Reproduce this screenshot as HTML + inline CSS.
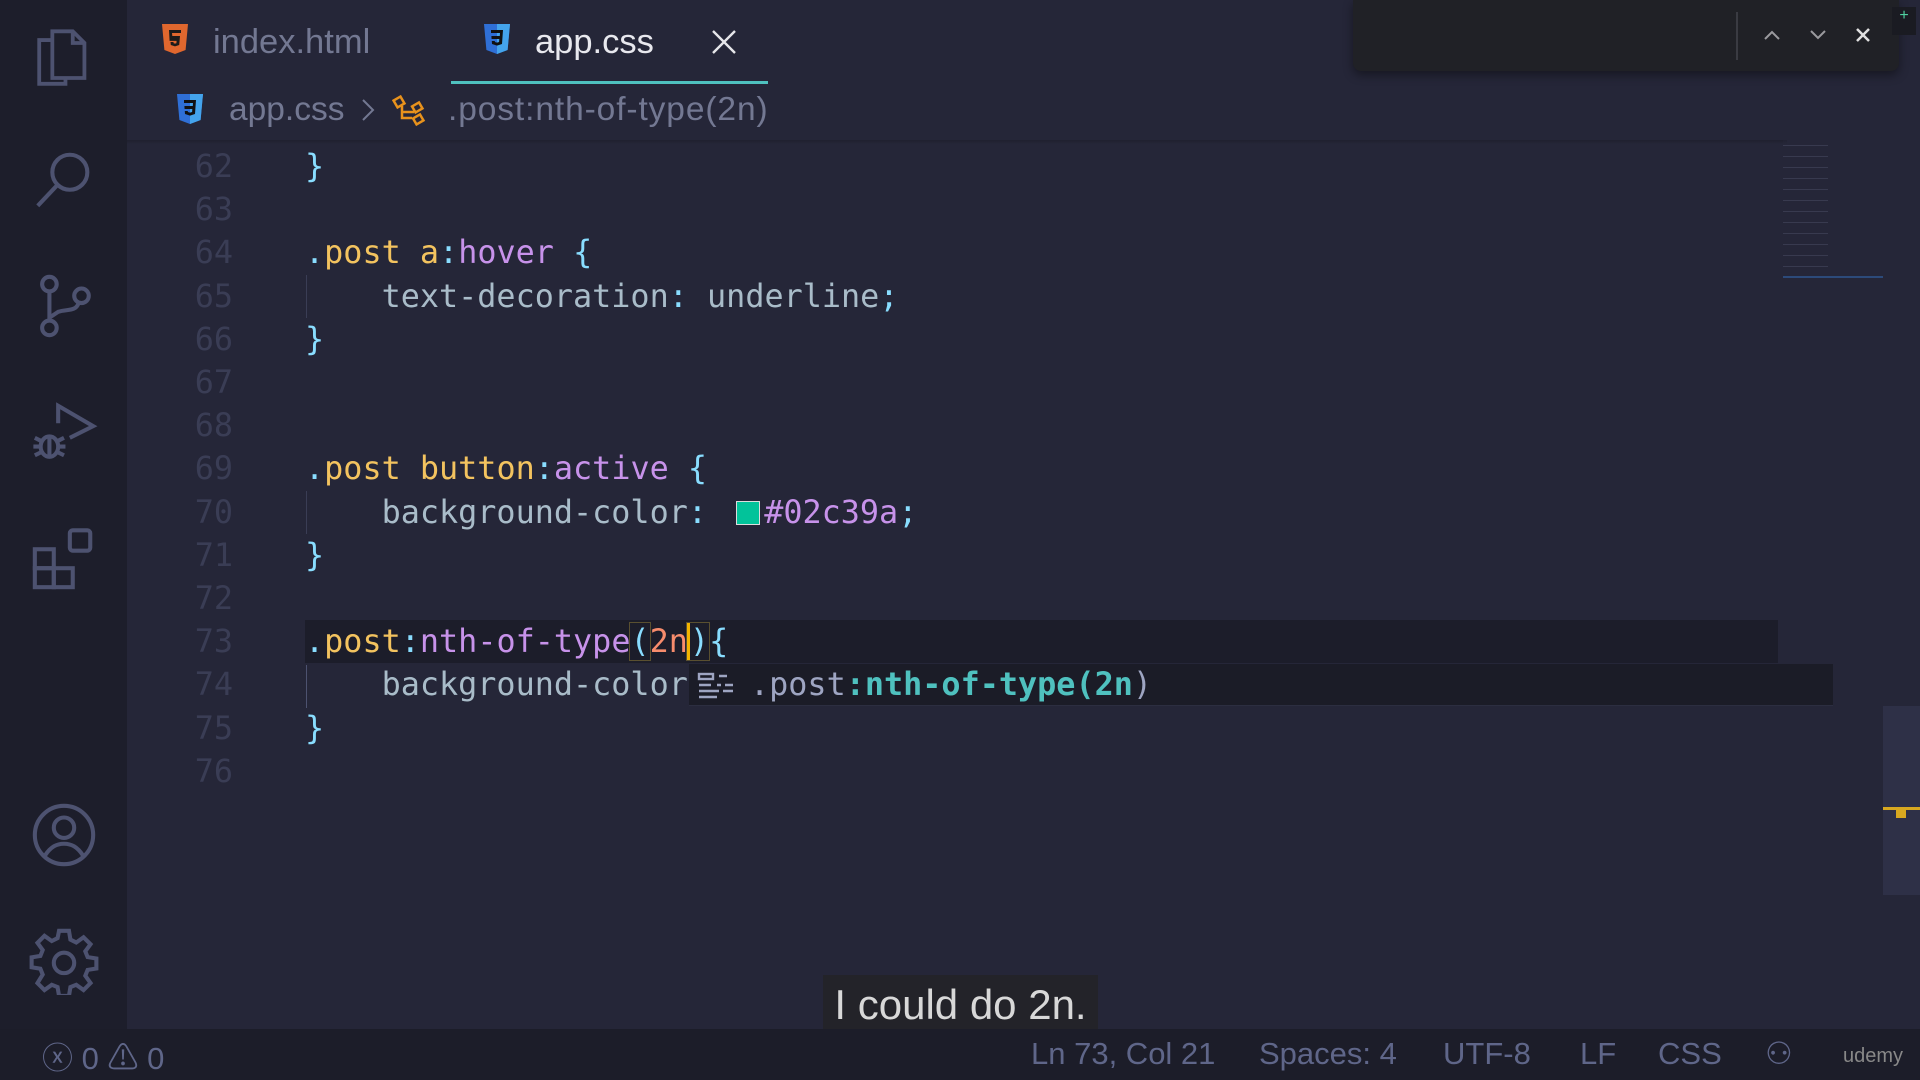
<!DOCTYPE html>
<html><head><meta charset="utf-8"><style>
*{margin:0;padding:0;box-sizing:border-box}
body{width:1920px;height:1080px;overflow:hidden;background:#252638;font-family:"Liberation Sans",sans-serif;position:relative}
.act{position:absolute;left:0;top:0;width:127px;height:1029px;background:#1d1e2b}
.act svg{position:absolute;left:29px;width:70px;height:70px}
.tabs{position:absolute;left:127px;top:0;right:0;height:84px;background:#252638}
.tab{position:absolute;top:23px;font-size:34.5px;color:#737892}
.ul{position:absolute;left:451px;top:81px;width:317px;height:3px;background:#4fc1bf}
.bc{position:absolute;top:91px;font-size:33.5px;color:#737892}
.shadow{position:absolute;left:127px;top:140px;width:1660px;height:4px;background:linear-gradient(#1f202f,transparent)}
.code{position:absolute;left:0;top:145px;width:1920px;font-family:"DejaVu Sans Mono","Liberation Mono",monospace;font-size:31.8px}
.ln{position:absolute;left:0;height:43.2px;line-height:43.2px;white-space:pre}
.num{position:absolute;width:233px;text-align:right;color:#3a3d55}
.tx{position:absolute;left:305px;color:#a9b7c6}
.y{color:#f3c35f}.p{color:#c792ea}.c{color:#89ddff}.o{color:#f78c6c}.w{color:#a9bcc9}
.hl{position:absolute;left:305px;top:620px;width:1473px;height:43px;background:#1c1d2a}
.sug{position:absolute;left:689px;top:664px;width:1144px;height:42px;background:#1b1c27;border-bottom:1px solid #2c2e40}
.status{position:absolute;left:0;top:1029px;width:1920px;height:51px;background:#1c1d29;color:#5f6689;font-size:31px}
.status span{position:absolute;top:7px}
.sub{position:absolute;left:823px;top:975px;width:275px;height:61px;background:#232329;color:#d8d8d8;font-size:42px;text-align:center;line-height:60px}
.find{position:absolute;left:1353px;top:0;width:546px;height:71px;background:#202126;border-radius:0 0 8px 8px;box-shadow:0 4px 10px rgba(0,0,0,.4)}
.guide{position:absolute;width:1px;background:#3a3d55}
</style></head><body>
<div class="act">
<svg style="top:24px" viewBox="0 0 24 24" fill="none" stroke="#4d5270" stroke-width="1.3"><path d="M8 5.5H3.5v15h9v-2.5"/><path d="M8 2.5h7l4 4v12H8z"/><path d="M15 2.5v4h4"/></svg>
<svg style="top:146px" viewBox="0 0 24 24" fill="none" stroke="#4d5270" stroke-width="1.4"><circle cx="14" cy="9" r="6"/><path d="M9.8 13.3L3 20.5"/></svg>
<svg style="top:271px" viewBox="0 0 24 24" fill="none" stroke="#4d5270" stroke-width="1.4"><circle cx="7" cy="4.5" r="2.5"/><circle cx="7" cy="19.5" r="2.5"/><circle cx="18" cy="8.5" r="2.5"/><path d="M7 7v10M17 11c-1 3-4 2-7 3l-3 2"/></svg>
<svg style="top:397px" viewBox="0 0 24 24" fill="none" stroke="#4d5270" stroke-width="1.4"><path d="M10 9V3l12 7-8 4"/><ellipse cx="7" cy="17" rx="3" ry="3.5"/><path d="M2 14l2 1M2 20l2-1M12 14l-2 1M12 20l-2-1M1.5 17h3M9.5 17h3M7 14v7"/></svg>
<svg style="top:523px" viewBox="0 0 24 24" fill="none" stroke="#4d5270" stroke-width="1.4"><rect x="2" y="9" width="6.5" height="6.5"/><rect x="2" y="15.5" width="6.5" height="6.5"/><rect x="8.5" y="15.5" width="6.5" height="6.5"/><rect x="14" y="2.5" width="7" height="7" rx="1"/></svg>
<svg style="top:800px" viewBox="0 0 24 24" fill="none" stroke="#4d5270" stroke-width="1.4"><circle cx="12" cy="12" r="10"/><circle cx="12" cy="9.5" r="3.5"/><path d="M5.5 19c2-3 4-4 6.5-4s4.5 1 6.5 4"/></svg>
<svg style="top:925px" viewBox="0 0 24 24" fill="none" stroke="#4d5270" stroke-width="1.4"><path d="M10.3 2h3.4l.5 3 2 1 2.5-1.8 2.4 2.4L19.3 9l.8 2 3 .5v3.4l-3 .5-.8 2 1.8 2.5-2.4 2.4-2.5-1.8-2 .8-.5 3h-3.4l-.5-3-2-.8-2.5 1.8-2.4-2.4L4.7 17l-.8-2-3-.5v-3.4l3-.5.8-2L2.9 6.1 5.3 3.7 7.8 5.5l2-1z"/><circle cx="12" cy="13" r="3.5"/></svg>
</div>
<div class="tabs"></div>
<svg style="position:absolute;left:161px;top:23px" width="28" height="32" viewBox="0 0 28 32"><path d="M1 1h26l-2.4 26L14 31 3.4 27z" fill="#e0672e"/><path d="M8 7h12v3H11l.3 3H19l-.8 9-4.2 1.4-4.2-1.4-.3-3h3l.1 1.2 1.4.4 1.4-.4.2-2.3H8.6z" fill="#1b1b1b"/></svg>
<div class="tab" style="left:213px">index.html</div>
<svg style="position:absolute;left:483px;top:23px" width="28" height="32" viewBox="0 0 28 32"><path d="M1 1h26l-2.4 26L14 31 3.4 27z" fill="#2f6fd6"/><path d="M14 1h13l-2.4 26L14 31z" fill="#44a4ec"/><path d="M8 7h12l-1 14-5 1.6-5-1.6-.2-3h3l.1 1 2.1.6 2.1-.6.2-3H8.6l-.2-3h8.4l.2-3H8z" fill="#111"/></svg>
<div class="tab" style="left:535px;color:#e8e8ee">app.css</div>
<svg style="position:absolute;left:711px;top:29px" width="26" height="26" viewBox="0 0 26 26" stroke="#e6e6ea" stroke-width="2.4"><path d="M2 2l22 22M24 2L2 24"/></svg>
<div class="ul"></div>
<svg style="position:absolute;left:176px;top:93px" width="28" height="32" viewBox="0 0 28 32"><path d="M1 1h26l-2.4 26L14 31 3.4 27z" fill="#2f6fd6"/><path d="M14 1h13l-2.4 26L14 31z" fill="#44a4ec"/><path d="M8 7h12l-1 14-5 1.6-5-1.6-.2-3h3l.1 1 2.1.6 2.1-.6.2-3H8.6l-.2-3h8.4l.2-3H8z" fill="#111"/></svg>
<div class="bc" style="left:229px">app.css</div>
<svg style="position:absolute;left:361px;top:98px" width="14" height="24" viewBox="0 0 14 24" fill="none" stroke="#737892" stroke-width="2"><path d="M2 2l10 10L2 22"/></svg>
<svg style="position:absolute;left:392px;top:94px" width="38" height="34" viewBox="0 0 38 34" fill="none" stroke="#e8921c" stroke-width="2.5"><rect x="3" y="4" width="8" height="8" transform="rotate(-30 7 8)"/><path d="M10 12v12h10M10 18h12"/><rect x="21" y="10" width="8" height="7" transform="rotate(-30 25 13)"/><rect x="22" y="22" width="8" height="7" transform="rotate(-30 26 25)"/></svg>
<div class="bc" style="left:448px;letter-spacing:0.9px">.post:nth-of-type(2n)</div>
<div class="shadow"></div>
<div class="hl"></div>
<div class="guide" style="left:306px;top:275px;height:43px"></div>
<div class="guide" style="left:306px;top:491px;height:43px"></div>
<div class="guide" style="left:306px;top:665px;height:43px;background:#4d5270"></div>
<div class="code">
<div class="ln" style="top:0"><span class="num">62</span><span class="tx c">}</span></div>
<div class="ln" style="top:43.2px"><span class="num">63</span></div>
<div class="ln" style="top:86.4px"><span class="num">64</span><span class="tx"><span class="c">.</span><span class="y">post a</span><span class="c">:</span><span class="p">hover</span> <span class="c">{</span></span></div>
<div class="ln" style="top:129.6px"><span class="num">65</span><span class="tx w">    text-decoration<span class="c">:</span> underline<span class="c">;</span></span></div>
<div class="ln" style="top:172.8px"><span class="num">66</span><span class="tx c">}</span></div>
<div class="ln" style="top:216px"><span class="num">67</span></div>
<div class="ln" style="top:259.2px"><span class="num">68</span></div>
<div class="ln" style="top:302.4px"><span class="num">69</span><span class="tx"><span class="c">.</span><span class="y">post button</span><span class="c">:</span><span class="p">active</span> <span class="c">{</span></span></div>
<div class="ln" style="top:345.6px"><span class="num">70</span><span class="tx w">    background-color<span class="c">:</span> <span style="display:inline-block;width:24px;height:24px;background:#02c39a;border:1px solid #ddd;vertical-align:-2px;margin-left:10px;margin-right:4px"></span><span class="p">#02c39a</span><span class="c">;</span></span></div>
<div class="ln" style="top:388.8px"><span class="num">71</span><span class="tx c">}</span></div>
<div class="ln" style="top:432px"><span class="num">72</span></div>
<div class="ln" style="top:475.2px"><span class="num">73</span><span class="tx"><span class="c">.</span><span class="y">post</span><span class="c">:</span><span class="p">nth-of-type</span><span class="c" style="outline:1px solid #5a5030">(</span><span class="o">2n</span><span class="c" style="outline:1px solid #5a5030;border-left:3px solid #f3b400;margin-left:-1px">)</span><span class="c">{</span></span></div>
<div class="ln" style="top:518.4px"><span class="num">74</span><span class="tx w">    background-color</span></div>
<div class="ln" style="top:561.6px"><span class="num">75</span><span class="tx c">}</span></div>
<div class="ln" style="top:604.8px"><span class="num">76</span></div>
</div>
<div class="sug"><svg style="position:absolute;left:8px;top:8px" width="38" height="28" viewBox="0 0 38 28" stroke="#9ea5c2" stroke-width="2.4" fill="none"><rect x="2" y="2" width="14" height="5"/><path d="M22 4h8M2 13h12M20 13h4M28 13h8M2 19h20M26 19h10M2 25h18"/></svg><span style="position:absolute;left:61px;top:0;line-height:42px;font-family:'DejaVu Sans Mono',monospace;font-size:31.8px;color:#9ea5c2">.post<b style="color:#4fc1bf">:nth-of-type(2n</b>)</span></div>
<div class="find"><div style="position:absolute;left:383px;top:12px;width:2px;height:48px;background:#3a3b42"></div>
<svg style="position:absolute;left:409px;top:28px" width="20" height="14" viewBox="0 0 20 14" fill="none" stroke="#9a9a9e" stroke-width="2"><path d="M3 11l7-7 7 7"/></svg>
<svg style="position:absolute;left:455px;top:28px" width="20" height="14" viewBox="0 0 20 14" fill="none" stroke="#9a9a9e" stroke-width="2"><path d="M3 3l7 7 7-7"/></svg>
<svg style="position:absolute;left:502px;top:27px" width="16" height="16" viewBox="0 0 16 16" stroke="#e0e0e0" stroke-width="2.5"><path d="M2 2l12 12M14 2L2 14"/></svg></div>
<div style="position:absolute;left:1892px;top:7px;width:24px;height:28px;background:#1a1b22;color:#4fd0a0;font-size:16px;text-align:center">+</div>
<div style="position:absolute;left:1783px;top:140px;width:45px;height:140px;opacity:.35;background:repeating-linear-gradient(#252638 0 5px,#5a607a 5px 6px,#252638 6px 11px)"></div>
<div style="position:absolute;left:1783px;top:276px;width:100px;height:2px;background:#2c4a7a"></div>
<div style="position:absolute;left:1883px;top:706px;width:37px;height:189px;background:#2e3047"></div>
<div style="position:absolute;left:1883px;top:807px;width:37px;height:3px;background:#d8a820"></div>
<div style="position:absolute;left:1896px;top:808px;width:10px;height:10px;background:#d8a820"></div>
<div class="sub">I could do 2n.</div>
<div class="status">
<span style="left:42px;top:4px">ⓧ 0 ⚠ 0</span>
<span style="left:1031px">Ln 73, Col 21</span>
<span style="left:1259px">Spaces: 4</span>
<span style="left:1443px">UTF-8</span>
<span style="left:1580px">LF</span>
<span style="left:1658px">CSS</span>
<span style="left:1765px">⚇</span>
<span style="left:1843px;font-size:20px;top:16px;color:#888">udemy</span>
</div>
</body></html>
